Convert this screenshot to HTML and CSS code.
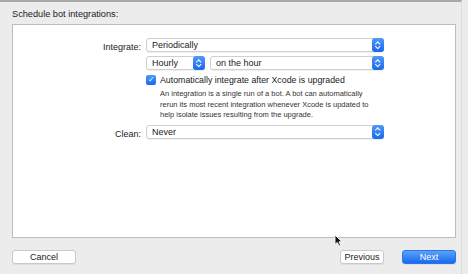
FILE: index.html
```html
<!DOCTYPE html>
<html lang="en">
<head>
    <meta charset="UTF-8">
    <title>Schedule bot integrations</title>
    <link rel="stylesheet" href="styles.css">
</head>
<body>
    <div class="window">
        <div class="title">Schedule bot integrations:</div>

        <div class="panel">
            <div class="form">
                <div class="label">Integrate:</div>
                <div class="popup wide">
                    <span>Periodically</span>
                    <span class="stepper"></span>
                </div>

                <div></div>
                <div class="pair">
                    <div class="popup hourly">
                        <span>Hourly</span>
                        <span class="stepper"></span>
                    </div>
                    <div class="popup grow">
                        <span>on the hour</span>
                        <span class="stepper"></span>
                    </div>
                </div>

                <div></div>
                <label class="check">
                    <span class="box">&#10003;</span>
                    Automatically integrate after Xcode is upgraded
                </label>

                <div></div>
                <p class="note">An integration is a single run of a bot. A bot can automatically rerun its most recent integration whenever Xcode is updated to help isolate issues resulting from the upgrade.</p>

                <div class="label">Clean:</div>
                <div class="popup wide">
                    <span>Never</span>
                    <span class="stepper"></span>
                </div>
            </div>
        </div>

        <div class="footer">
            <button class="btn cancel">Cancel</button>
            <div class="right">
                <button class="btn prev">Previous</button>
                <button class="btn primary">Next</button>
            </div>
        </div>

        <!-- mouse pointer -->
        <svg class="cursor" width="9" height="13" viewBox="0 0 9 13">
            <path d="M1 1 L1 10.5 L3.3 8.4 L5 12 L6.6 11.3 L5 7.8 L8 7.8 Z" fill="#111" stroke="#fff" stroke-width="0.9"/>
        </svg>
    </div>
</body>
</html>
```

FILE: styles.css
```css
body {
    margin: 0;
    background-color: #ececec;
    font-family: "Liberation Sans", Arial, sans-serif;
    color: #222;
}
.window {
    position: relative;
    width: 462px;
    height: 274px;
    box-sizing: border-box;
    border-top: 2px solid #a9a9a9;
    border-right: 1px solid #dcdcdc;
    padding: 0 0 0 12px;
}
.title {
    height: 22px;
    padding-top: 7px;
    box-sizing: border-box;
    font-size: 9.2px;
    color: #1a1a1a;
}
.panel {
    width: 444px;
    height: 214px;
    box-sizing: border-box;
    background: white;
    border: 1px solid #bdbdbd;
    padding-top: 13px;
}
.form {
    display: grid;
    grid-template-columns: 128px 238px;
    column-gap: 5px;
    align-items: center;
}
.label {
    text-align: right;
    font-size: 9px;
}
.popup {
    display: flex;
    align-items: center;
    justify-content: space-between;
    height: 14px;
    box-sizing: border-box;
    background: white;
    border: 1px solid #cfcfcf;
    border-radius: 3px;
    box-shadow: 0 1px 0 rgba(0,0,0,0.06);
    padding-left: 5px;
    font-size: 9px;
    margin-bottom: 4px;
}
.stepper {
    width: 12px;
    height: 14px;
    margin-right: -1px;
    border-radius: 3px;
    background: linear-gradient(#4f9af7, #1a67ef);
    position: relative;
}
.stepper::before,
.stepper::after {
    content: "";
    position: absolute;
    left: 4px;
    width: 2.5px;
    height: 2.5px;
    border-left: 1px solid white;
    border-top: 1px solid white;
}
.stepper::before {
    top: 3.5px;
    transform: rotate(45deg);
}
.stepper::after {
    top: 7px;
    transform: rotate(225deg);
}
.pair {
    display: flex;
    gap: 5px;
}
.hourly {
    width: 59px;
}
.grow {
    flex: 1;
}
.check {
    display: flex;
    align-items: center;
    gap: 4px;
    font-size: 8.8px;
    height: 10px;
    margin-top: 1px;
}
.box {
    width: 10px;
    height: 10px;
    border-radius: 2px;
    background: linear-gradient(#4f9af7, #1a67ef);
    color: white;
    font-size: 8px;
    line-height: 10px;
    text-align: center;
}
.note {
    width: 220px;
    margin: 4px 0 4px 14px;
    font-size: 7.5px;
    line-height: 10.5px;
    color: #333;
}
.footer {
    display: flex;
    justify-content: space-between;
    width: 444px;
    padding-top: 12px;
}
.right {
    display: flex;
    gap: 18px;
}
.btn {
    height: 14px;
    padding: 0;
    font-family: "Liberation Sans", Arial, sans-serif;
    font-size: 9px;
    color: #222;
    background: white;
    border: 1px solid #c9c9c9;
    border-radius: 3px;
    box-shadow: 0 1px 0 rgba(0,0,0,0.06);
}
.cancel {
    width: 64px;
}
.prev {
    width: 44px;
}
.primary {
    width: 54px;
    color: white;
    border-color: #2a72ee;
    background: linear-gradient(#5aa2f8, #166bf0);
}
.cursor {
    position: absolute;
    left: 334px;
    top: 232px;
}
```
